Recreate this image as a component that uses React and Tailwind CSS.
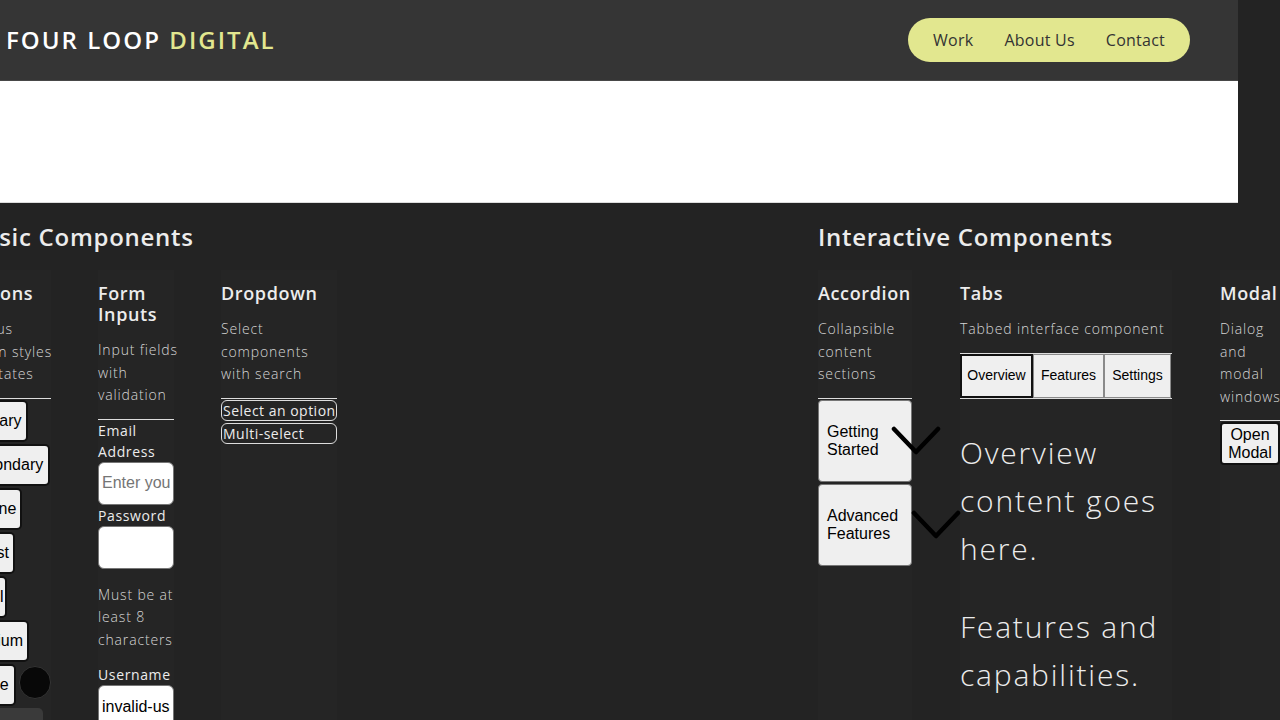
import React, { useState } from 'react';

const Chevron = ({ className }) => (
  <svg className={className} width="50" height="30" viewBox="0 0 50 30" fill="none">
    <polyline points="3,3 25,26 47,3" stroke="#000" strokeWidth="4.5" strokeLinecap="round" strokeLinejoin="round" />
  </svg>
);

// lines are given one by one so they break where the picture breaks them
const Lines = ({ lines }) =>
  lines.map((l, i) => (
    <span key={i} className="block whitespace-nowrap">{l}</span>
  ));

const Column = ({ title, desc, width, children }) => (
  <div className={`${width} shrink-0 bg-[#252525] pt-[13px]`}>
    <h3 className="text-[18px] font-semibold leading-[21px] tracking-[0.035em] text-[#ececec] mb-[14px]">
      <Lines lines={title} />
    </h3>
    <p className="text-[14px] font-light leading-[22.5px] tracking-[0.06em] text-[#d6d6d6] mb-[12px]">
      <Lines lines={desc} />
    </p>
    {children}
  </div>
);

const btn = "h-[42px] bg-[#efefef] text-black border-2 border-[#111] rounded-[5px] text-[16px] font-['Liberation_Sans',Arial,sans-serif] text-center";
const label = "block text-[14px] font-medium leading-[21px] tracking-[0.045em] text-[#ececec]";
const field = "w-[76px] h-[43px] bg-white border border-[#767676] rounded-[6px] px-[3px] text-[16px] text-black font-['Liberation_Sans',Arial,sans-serif]";
const accItem = "h-[82px] bg-[#efefef] border border-[#767676] rounded-[4px] pl-[8px] text-left text-[16px] leading-[18px] text-black font-['Liberation_Sans',Arial,sans-serif]";
const tabBtn = "h-[44px] bg-[#efefef] text-[14px] text-black font-['Liberation_Sans',Arial,sans-serif]";

const App = () => {
  const [tab, setTab] = useState('overview');

  return (
    <div className="w-[1280px] h-[720px] overflow-hidden bg-[#232323] font-['Open_Sans',sans-serif]">
      <header className="w-[1238px] h-[81px] bg-[#353535] border-b border-[#484848] flex items-center justify-between pl-[6px] pr-[48px]">
        <div className="text-[24px] font-semibold tracking-[0.085em] text-white">
          FOUR LOOP <span className="text-[#e2e78f]">DIGITAL</span>
        </div>
        <nav className="h-[44px] bg-[#e2e78f] rounded-full flex items-center gap-[31px] px-[25px] text-[16px] font-medium tracking-[0.015em] text-[#333]">
          <a>Work</a>
          <a>About Us</a>
          <a>Contact</a>
        </nav>
      </header>

      <div className="w-[1238px] h-[122px] bg-white border-b border-[#dcdcdc]"></div>

      <main className="flex pt-[18px]">
        <section className="w-[858px] shrink-0 -ml-[40px]">
          <h2 className="pl-[8px] text-[24px] font-semibold leading-[32px] tracking-[0.03em] text-[#ececec] mb-[17px]">Basic Components</h2>
          <div className="flex gap-[47px]">
            <Column title={['Buttons']} desc={['Various', 'button styles', 'and states']} width="w-[91px]">
              <div className="border-t border-[#dddddd] pt-[1px] flex flex-col gap-[2px]">
                <button className={`${btn} w-[68px]`}>Primary</button>
                <button className={`${btn} w-[90px]`}>Secondary</button>
                <button className={`${btn} w-[62px]`}>Outline</button>
                <button className={`${btn} w-[55px]`}>Ghost</button>
                <button className={`${btn} w-[47px] text-[13px]`}>Small</button>
                <button className={`${btn} w-[69px]`}>Medium</button>
                <div className="flex items-start gap-[3px]">
                  <button className={`${btn} w-[59px]`}>Large</button>
                  <span className="mt-[2px] w-[33px] h-[33px] rounded-full bg-[#080808] border border-[#333]"></span>
                </div>
                <div className="w-[83px] h-[30px] bg-[#3a3a3a] rounded-[5px]"></div>
              </div>
            </Column>

            <Column title={['Form', 'Inputs']} desc={['Input fields', 'with', 'validation']} width="w-[76px]">
              <div className="border-t border-[#dddddd]">
                <label className={label}>Email Address</label>
                <input className={`${field} placeholder:text-[#757575]`} placeholder="Enter your email" />
                <label className={label}>Password</label>
                <input type="password" className={field} />
                <p className="mt-[15px] text-[14px] font-light leading-[22.5px] tracking-[0.06em] text-[#d6d6d6]">
                  <Lines lines={['Must be at', 'least 8', 'characters']} />
                </p>
                <label className={`${label} mt-[13px]`}>Username</label>
                <input className={field} defaultValue="invalid-user" />
              </div>
            </Column>

            <Column title={['Dropdown']} desc={['Select', 'components', 'with search']} width="w-[116px]">
              <div className="border-t border-[#dddddd] pt-[1px] flex flex-col gap-[2px]">
                <button className="h-[21px] border border-[#dddddd] rounded-[6px] px-[1px] text-left text-[14px] leading-[19px] tracking-[0.035em] text-[#ececec] whitespace-nowrap">Select an option</button>
                <button className="h-[21px] border border-[#dddddd] rounded-[6px] px-[1px] text-left text-[14px] leading-[19px] tracking-[0.035em] text-[#ececec]">Multi-select</button>
              </div>
            </Column>
          </div>
        </section>

        <section className="shrink-0">
          <h2 className="text-[24px] font-semibold leading-[32px] tracking-[0.03em] text-[#ececec] mb-[17px]">Interactive Components</h2>
          <div className="flex gap-[48px]">
            <Column title={['Accordion']} desc={['Collapsible', 'content', 'sections']} width="w-[94px]">
              <div className="relative border-t border-[#dddddd] pt-[1px] flex flex-col gap-[2px]">
                <button className={accItem}>Getting<br />Started</button>
                <button className={accItem}>Advanced<br />Features</button>
                <Chevron className="absolute left-[73px] top-[27px]" />
                <Chevron className="absolute left-[93px] top-[111px]" />
              </div>
            </Column>

            <Column title={['Tabs']} desc={['Tabbed interface component']} width="w-[212px]">
              <div className="border-t border-[#dddddd]">
                <div className="flex h-[45px] border-b border-[#dddddd]">
                  <button onClick={() => setTab('overview')} className={`${tabBtn} w-[73px] border-2 border-[#111]`}>
                    Overview
                  </button>
                  <button onClick={() => setTab('features')} className={`${tabBtn} w-[71px] border border-[#8a8a8a]`}>
                    Features
                  </button>
                  <button onClick={() => setTab('settings')} className={`${tabBtn} w-[67px] border border-[#8a8a8a]`}>
                    Settings
                  </button>
                </div>
                <p className="my-[30px] text-[30px] font-light leading-[48px] tracking-[0.06em] text-[#ececec]">Overview content goes here.</p>
                <p className="my-[30px] text-[30px] font-light leading-[48px] tracking-[0.06em] text-[#ececec]">Features and capabilities.</p>
              </div>
            </Column>

            <Column title={['Modal']} desc={['Dialog', 'and', 'modal', 'windows']} width="w-[62px]">
              <div className="border-t border-[#dddddd] pt-[1px]">
                <button className="w-[60px] h-[43px] bg-[#efefef] border-2 border-[#111] rounded-[4px] text-[16px] leading-[18px] text-black font-['Liberation_Sans',Arial,sans-serif]">
                  Open Modal
                </button>
              </div>
            </Column>
          </div>
        </section>
      </main>
    </div>
  );
};

export default App;
